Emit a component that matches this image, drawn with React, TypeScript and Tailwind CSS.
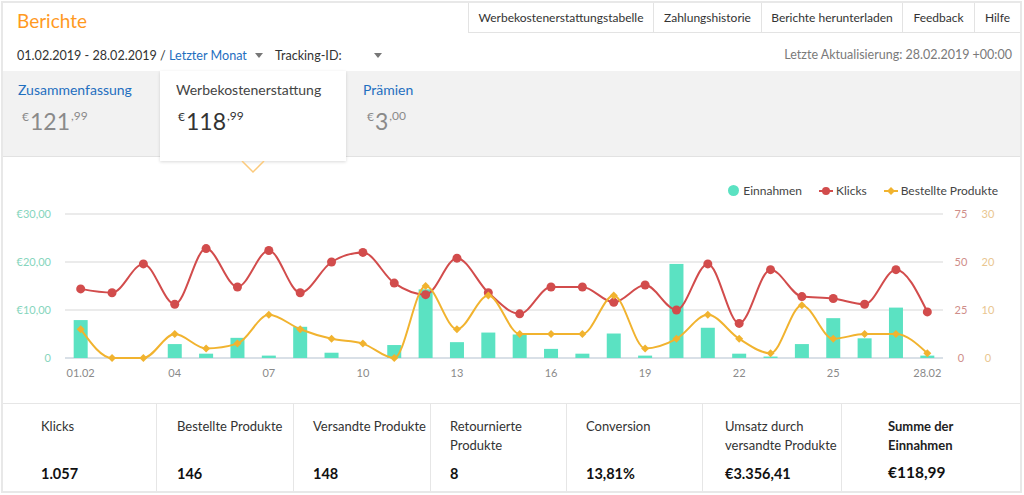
import React from 'react'

const einnahmen = [7.9, 0, 0, 2.9, 0.9, 4.2, 0.5, 6.5, 1.1, 0, 2.7, 14.3, 3.3, 5.3, 4.9, 1.9, 0.9, 5.1, 0.5, 19.6, 6.3, 0.9, 0.3, 2.9, 8.3, 4.1, 10.5, 0.5]
const klicks = [36, 34, 49, 28, 57, 37, 56, 34, 50, 55, 39, 33, 52, 34, 23, 37, 37, 29, 38, 25, 49, 18, 46, 32, 31, 28, 46, 24]
const bestellt = [6, 0, 0, 5, 2, 3, 9, 6, 4, 3, 0, 15, 6, 13, 5, 5, 5, 13, 2, 4, 9, 4, 1, 11, 4, 5, 5, 1]

const X0 = 62
const X1 = 940
const BASE = 158
const band = (X1 - X0) / 28
const cx = (i: number) => X0 + (i + 0.5) * band

// monotone X curve, same idea as d3.curveMonotoneX
function monotonePath(pts: [number, number][]) {
  const n = pts.length
  const h = pts[1][0] - pts[0][0]
  const s: number[] = []
  for (let i = 0; i < n - 1; i++) s[i] = (pts[i + 1][1] - pts[i][1]) / h
  const m: number[] = new Array(n).fill(0)
  for (let i = 1; i < n - 1; i++) {
    const s0 = s[i - 1]
    const s1 = s[i]
    const p = (s0 + s1) / 2
    m[i] = (Math.sign(s0) + Math.sign(s1)) * Math.min(Math.abs(s0), Math.abs(s1), 0.5 * Math.abs(p)) || 0
  }
  m[0] = (3 * s[0] - m[1]) / 2
  m[n - 1] = (3 * s[n - 2] - m[n - 2]) / 2
  let d = `M${pts[0][0]},${pts[0][1]}`
  for (let i = 0; i < n - 1; i++) {
    const [x0, y0] = pts[i]
    const [x1, y1] = pts[i + 1]
    d += ` C${x0 + h / 3},${y0 + (m[i] * h) / 3} ${x1 - h / 3},${y1 - (m[i + 1] * h) / 3} ${x1},${y1}`
  }
  return d
}

const RED = '#d24c4c'
const YELLOW = '#f1b32f'
const TEAL = '#5be2c2'

const navItems = [
  { label: 'Werbekostenerstattungstabelle', w: 'w-[185px]' },
  { label: 'Zahlungshistorie', w: 'w-[108px]' },
  { label: 'Berichte herunterladen', w: 'w-[141px]' },
  { label: 'Feedback', w: 'w-[72px]' },
  { label: 'Hilfe', w: 'w-[46px]' },
]

const Caret = () => (
  <svg width="8" height="5" viewBox="0 0 8 5" className="inline-block">
    <path d="M0 0 L8 0 L4 5 Z" fill="#777" />
  </svg>
)

const Amount = ({ whole, cents, active }: { whole: string; cents: string; active?: boolean }) => (
  <div className={`flex items-start ${active ? 'text-[#333]' : 'text-[#8a8a8a]'}`}>
    <span className="text-[12px] leading-[14px] mt-[1px] mr-[1px]">€</span>
    <span className="text-[23px] leading-[24px]">{whole}</span>
    <span className="text-[12px] leading-[14px] ml-[1px]">,{cents}</span>
  </div>
)

const stats = [
  { label: 'Klicks', value: '1.057', cls: 'w-[153px] pl-[38px]' },
  { label: 'Bestellte Produkte', value: '146', cls: 'w-[137px] pl-[20px] border-l' },
  { label: 'Versandte Produkte', value: '148', cls: 'w-[137px] pl-[19px] border-l' },
  { label: 'Retournierte Produkte', value: '8', cls: 'w-[136px] pl-[19px] pr-[20px] border-l' },
  { label: 'Conversion', value: '13,81%', cls: 'w-[136px] pl-[19px] border-l' },
  { label: 'Umsatz durch versandte Produkte', value: '€3.356,41', cls: 'w-[139px] pl-[22px] pr-[2px] border-l' },
]

function Chart() {
  const redPts = klicks.map((v, i) => [cx(i), BASE - v * 1.92] as [number, number])
  const yelPts = bestellt.map((v, i) => [cx(i), BASE - v * 4.8] as [number, number])
  const xLabels = ['01.02', '04', '07', '10', '13', '16', '19', '22', '25', '28.02']
  return (
    <svg width="1017" height="203" viewBox="0 0 1017 203" className="block">
      {[14, 62, 110].map((y) => (
        <line key={y} x1={X0} x2={X1} y1={y} y2={y} stroke="#e4e4e4" strokeWidth="1.5" />
      ))}
      <line x1={X0} x2={X1} y1={BASE} y2={BASE} stroke="#ccd6df" strokeWidth="1.5" />
      {['€30,00', '€20,00', '€10,00', '0'].map((t, i) => (
        <text key={t} x="48" y={18 + i * 48} textAnchor="end" fontSize="11" fill="#86d5bd">
          {t}
        </text>
      ))}
      {['75', '50', '25', '0'].map((t, i) => (
        <text key={'r' + t} x="958" y={18 + i * 48} textAnchor="middle" fontSize="11" fill="#cf8d89">
          {t}
        </text>
      ))}
      {['30', '20', '10', '0'].map((t, i) => (
        <text key={'y' + t} x="985" y={18 + i * 48} textAnchor="middle" fontSize="11" fill="#e9c690">
          {t}
        </text>
      ))}
      {einnahmen.map((v, i) =>
        v > 0 ? <rect key={i} x={cx(i) - 7} y={BASE - v * 4.8} width="14" height={v * 4.8} fill={TEAL} /> : null
      )}
      <path d={monotonePath(redPts)} fill="none" stroke={RED} strokeWidth="2" />
      {redPts.map(([x, y], i) => (
        <circle key={i} cx={x} cy={y} r="4.5" fill={RED} />
      ))}
      <path d={monotonePath(yelPts)} fill="none" stroke={YELLOW} strokeWidth="2" />
      {yelPts.map(([x, y], i) => (
        <path key={i} d={`M${x} ${y - 4} L${x + 4} ${y} L${x} ${y + 4} L${x - 4} ${y} Z`} fill={YELLOW} />
      ))}
      {xLabels.map((t, k) => (
        <text key={t} x={cx(k * 3)} y="177" textAnchor="middle" fontSize="11" fill="#8a8a8a">
          {t}
        </text>
      ))}
    </svg>
  )
}

export default function App() {
  return (
    <div className="w-[1024px] h-[495px] bg-white font-['Lato','Liberation_Sans',sans-serif] text-[#333] overflow-hidden">
      <div className="ml-px mt-px w-[1021px] h-[492px] border-2 border-[#e8e8e8] flex flex-col">
        {/* Header */}
        <div className="h-[68px] flex justify-between">
          <div className="pl-[14px] pt-[5px]">
            <h1 className="text-[19px] leading-[26px] text-[#ff9a1f]">Berichte</h1>
            <div className="mt-[12px] flex items-center text-[12.6px] leading-[18px]">
              <span className="whitespace-pre">01.02.2019 - 28.02.2019 / </span>
              <span className="text-[#1f6fbf]">Letzter Monat</span>
              <span className="ml-[8px] mb-[1px]">
                <Caret />
              </span>
              <span className="ml-[12px]">Tracking-ID:</span>
              <span className="ml-[32px] mb-[1px]">
                <Caret />
              </span>
            </div>
          </div>
          <div className="flex flex-col items-end">
            <div className="flex h-[30px]">
              {navItems.map((n) => (
                <div
                  key={n.label}
                  className={`${n.w} h-full flex items-center justify-center border-l border-b border-[#e3e3e3] text-[12px]`}
                >
                  {n.label}
                </div>
              ))}
            </div>
            <div className="mt-[13px] pr-[8px] text-[12.5px] leading-[18px] text-[#7a7a7a]">
              Letzte Aktualisierung: 28.02.2019 +00:00
            </div>
          </div>
        </div>

        {/* Tabs */}
        <div className="h-[86px] bg-[#f2f2f2] border-b border-[#e2e2e2] flex items-start">
          <div className="w-[157px] pl-[15px] pt-[10px]">
            <div className="text-[14px] leading-[18px] text-[#1f6fbf]">Zusammenfassung</div>
            <div className="mt-[10px] pl-[4px]">
              <Amount whole="121" cents="99" />
            </div>
          </div>
          <div className="relative z-10 w-[186px] h-[90px] bg-white shadow-[0_1px_3px_rgba(0,0,0,0.15)] pl-[16px] pt-[10px]">
            <div className="text-[14px] leading-[18px] text-[#444]">Werbekostenerstattung</div>
            <div className="mt-[10px] pl-[2px]">
              <Amount whole="118" cents="99" active />
            </div>
            <svg width="24" height="13" viewBox="0 0 24 13" className="absolute left-[81px] top-full">
              <polyline points="1,0 12,11 23,0" fill="none" stroke="#fcca7c" strokeWidth="1.5" />
            </svg>
          </div>
          <div className="pl-[17px] pt-[10px]">
            <div className="text-[14px] leading-[18px] text-[#1f6fbf]">Prämien</div>
            <div className="mt-[10px] pl-[4px]">
              <Amount whole="3" cents="00" />
            </div>
          </div>
        </div>

        {/* Chart */}
        <div className="h-[246px]">
          <div className="h-[43px] pt-[24px] flex justify-end pr-[22px] gap-[17px] text-[12px] leading-[16px] text-[#444]">
            <div className="flex items-center gap-[4px]">
              <span className="w-[11px] h-[11px] rounded-full bg-[#5be2c2]" />
              <span>Einnahmen</span>
            </div>
            <div className="flex items-center gap-[3px]">
              <svg width="14" height="10" viewBox="0 0 14 10">
                <line x1="0" x2="14" y1="5" y2="5" stroke={RED} strokeWidth="2" />
                <circle cx="7" cy="5" r="4" fill={RED} />
              </svg>
              <span>Klicks</span>
            </div>
            <div className="flex items-center gap-[3px]">
              <svg width="14" height="10" viewBox="0 0 14 10">
                <line x1="0" x2="14" y1="5" y2="5" stroke={YELLOW} strokeWidth="2" />
                <path d="M7 1 L11 5 L7 9 L3 5 Z" fill={YELLOW} />
              </svg>
              <span>Bestellte Produkte</span>
            </div>
          </div>
          <Chart />
        </div>

        {/* Stats */}
        <div className="h-[88px] border-t border-[#e6e6e6] flex">
          {stats.map((s) => (
            <div key={s.label} className={`${s.cls} border-[#e6e6e6] pt-[13px]`}>
              <div className="h-[38px] text-[13px] leading-[19px] text-[#333]">{s.label}</div>
              <div className="mt-[9px] text-[14.5px] leading-[20px] font-bold text-[#111]">{s.value}</div>
            </div>
          ))}
          <div className="flex-1 border-l border-[#e6e6e6] pl-[46px] pt-[13px]">
            <div className="h-[38px] text-[13px] leading-[19px] font-bold text-[#222] w-[90px]">Summe der Einnahmen</div>
            <div className="mt-[6px] text-[15.5px] leading-[22px] font-bold text-[#111]">€118,99</div>
          </div>
        </div>
      </div>
    </div>
  )
}
